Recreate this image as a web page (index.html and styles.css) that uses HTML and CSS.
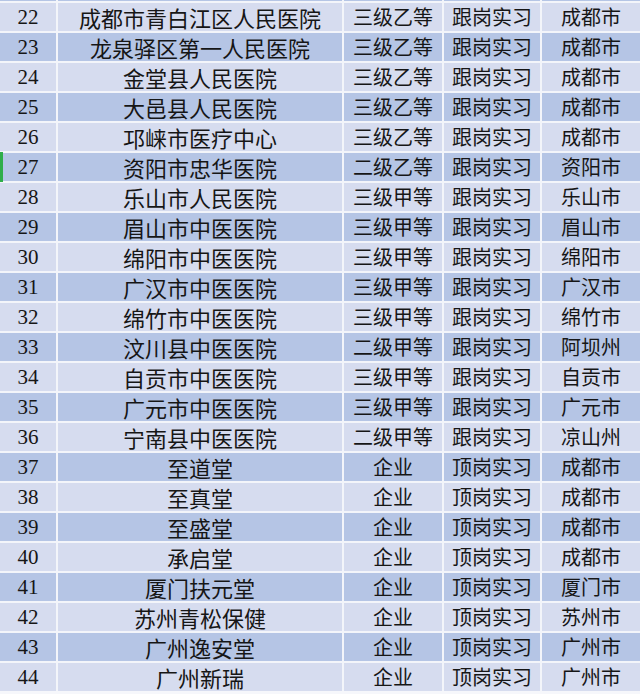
FILE: index.html
```html
<!DOCTYPE html>
<html lang="zh">
<head>
<meta charset="utf-8">
<link rel="stylesheet" href="styles.css">
</head>
<body>
<div class="table">
  <div class="row dark stub"><div></div><div></div><div></div><div></div><div></div></div>
  <div class="row light"><div class="num">22</div><div class="name">成都市青白江区人民医院</div><div>三级乙等</div><div>跟岗实习</div><div>成都市</div></div>
  <div class="row dark"><div class="num">23</div><div class="name">龙泉驿区第一人民医院</div><div>三级乙等</div><div>跟岗实习</div><div>成都市</div></div>
  <div class="row light"><div class="num">24</div><div class="name">金堂县人民医院</div><div>三级乙等</div><div>跟岗实习</div><div>成都市</div></div>
  <div class="row dark"><div class="num">25</div><div class="name">大邑县人民医院</div><div>三级乙等</div><div>跟岗实习</div><div>成都市</div></div>
  <div class="row light"><div class="num">26</div><div class="name">邛崃市医疗中心</div><div>三级乙等</div><div>跟岗实习</div><div>成都市</div></div>
  <div class="row dark"><div class="num marked">27</div><div class="name">资阳市忠华医院</div><div>二级乙等</div><div>跟岗实习</div><div>资阳市</div></div>
  <div class="row light"><div class="num">28</div><div class="name">乐山市人民医院</div><div>三级甲等</div><div>跟岗实习</div><div>乐山市</div></div>
  <div class="row dark"><div class="num">29</div><div class="name">眉山市中医医院</div><div>三级甲等</div><div>跟岗实习</div><div>眉山市</div></div>
  <div class="row light"><div class="num">30</div><div class="name">绵阳市中医医院</div><div>三级甲等</div><div>跟岗实习</div><div>绵阳市</div></div>
  <div class="row dark"><div class="num">31</div><div class="name">广汉市中医医院</div><div>三级甲等</div><div>跟岗实习</div><div>广汉市</div></div>
  <div class="row light"><div class="num">32</div><div class="name">绵竹市中医医院</div><div>三级甲等</div><div>跟岗实习</div><div>绵竹市</div></div>
  <div class="row dark"><div class="num">33</div><div class="name">汶川县中医医院</div><div>二级甲等</div><div>跟岗实习</div><div>阿坝州</div></div>
  <div class="row light"><div class="num">34</div><div class="name">自贡市中医医院</div><div>三级甲等</div><div>跟岗实习</div><div>自贡市</div></div>
  <div class="row dark"><div class="num">35</div><div class="name">广元市中医医院</div><div>三级甲等</div><div>跟岗实习</div><div>广元市</div></div>
  <div class="row light"><div class="num">36</div><div class="name">宁南县中医医院</div><div>二级甲等</div><div>跟岗实习</div><div>凉山州</div></div>
  <div class="row dark"><div class="num">37</div><div class="name">至道堂</div><div>企业</div><div>顶岗实习</div><div>成都市</div></div>
  <div class="row light"><div class="num">38</div><div class="name">至真堂</div><div>企业</div><div>顶岗实习</div><div>成都市</div></div>
  <div class="row dark"><div class="num">39</div><div class="name">至盛堂</div><div>企业</div><div>顶岗实习</div><div>成都市</div></div>
  <div class="row light"><div class="num">40</div><div class="name">承启堂</div><div>企业</div><div>顶岗实习</div><div>成都市</div></div>
  <div class="row dark"><div class="num">41</div><div class="name">厦门扶元堂</div><div>企业</div><div>顶岗实习</div><div>厦门市</div></div>
  <div class="row light"><div class="num">42</div><div class="name">苏州青松保健</div><div>企业</div><div>顶岗实习</div><div>苏州市</div></div>
  <div class="row dark"><div class="num">43</div><div class="name">广州逸安堂</div><div>企业</div><div>顶岗实习</div><div>广州市</div></div>
  <div class="row light"><div class="num">44</div><div class="name">广州新瑞</div><div>企业</div><div>顶岗实习</div><div>广州市</div></div>
</div>
</body>
</html>
```

FILE: styles.css
```css
html, body {
  margin: 0;
  padding: 0;
  background: #f6f7fb;
}

.table {
  display: flex;
  flex-direction: column;
  gap: 2px;
  width: 640px;
  background: #f3f5fa;
}

.row {
  display: grid;
  grid-template-columns: 56px 284px 98px 96px 98px;
  column-gap: 2px;
  height: 28px;
}

.row.stub {
  height: 1px;
}

.row > div {
  display: flex;
  align-items: center;
  justify-content: center;
  font-family: "Noto Sans CJK SC", "Noto Sans", sans-serif;
  font-size: 20px;
  color: #161616;
  line-height: 1;
  white-space: nowrap;
  position: relative;
}

.row > div.name {
  font-size: 22px;
}

.row > div.num {
  font-family: "Liberation Serif", "DejaVu Serif", serif;
  font-size: 21px;
}

.light > div {
  background: #d6dcef;
}

.dark > div {
  background: #b5c5e5;
}

.marked::before {
  content: "";
  position: absolute;
  left: 0;
  top: -1px;
  bottom: -1px;
  width: 3px;
  background: #2fae4a;
}
```
